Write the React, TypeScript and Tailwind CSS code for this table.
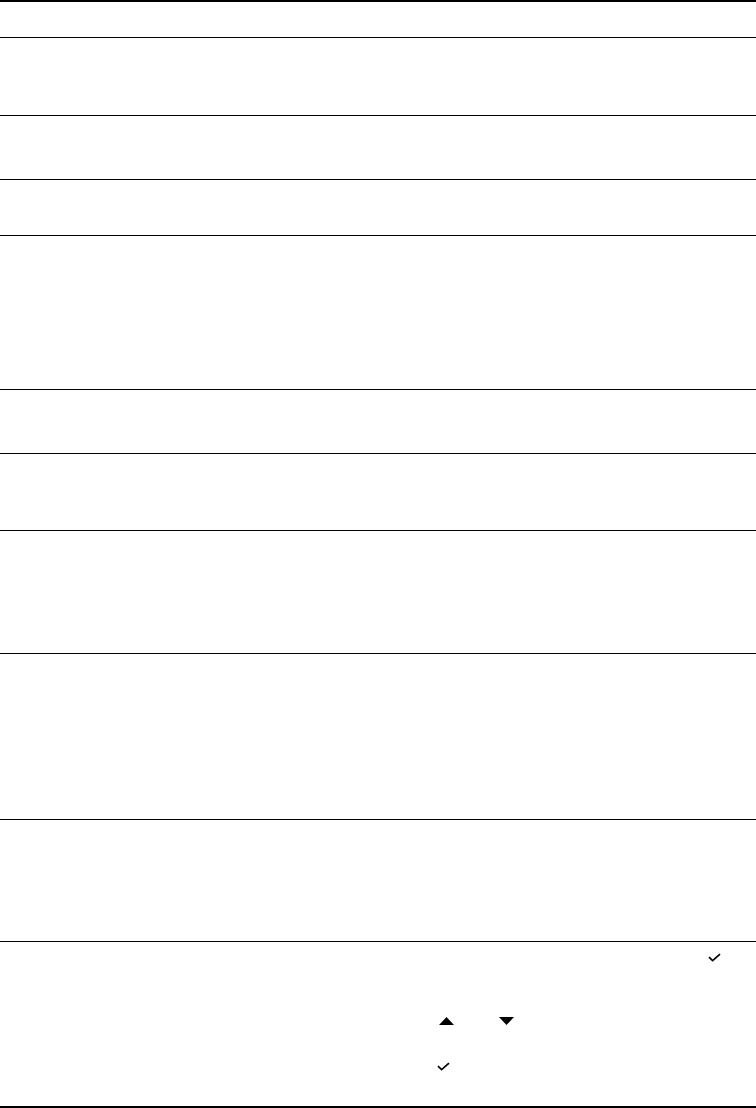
const rowHeights = [36, 78, 64, 56, 154, 64, 77, 123, 166, 122];

const Check = () => (
  <svg width="13" height="9" viewBox="0 0 13 9" className="block">
    <path d="M1 4.2 L4.6 7.6 L12 1.2" fill="none" stroke="#000" strokeWidth="1.7" />
  </svg>
);

const Triangle = ({ up }: { up: boolean }) => (
  <svg width="15" height="8" viewBox="0 0 15 8" className="block">
    <polygon points={up ? "0,8 7.5,0 15,8" : "0,0 15,0 7.5,8"} fill="#000" />
  </svg>
);

export default function App() {
  return (
    <div className="w-[756px] h-[1108px] bg-white font-['Liberation_Sans',sans-serif]">
      <div className="border-t-2 border-b-2 border-black">
        {rowHeights.map((h, i) => (
          <div
            key={i}
            className="border-b border-black"
            style={{ height: h }}
          />
        ))}

        {/* last row: sort arrows and checks */}
        <div className="h-[164px] flex flex-col">
          <div className="flex justify-end pr-[35px] pt-[11px]">
            <Check />
          </div>
          <div className="flex gap-[45px] pl-[439px] pt-[55px]">
            <Triangle up />
            <Triangle up={false} />
          </div>
          <div className="pl-[437px] pt-[37px]">
            <Check />
          </div>
        </div>
      </div>
    </div>
  );
}
